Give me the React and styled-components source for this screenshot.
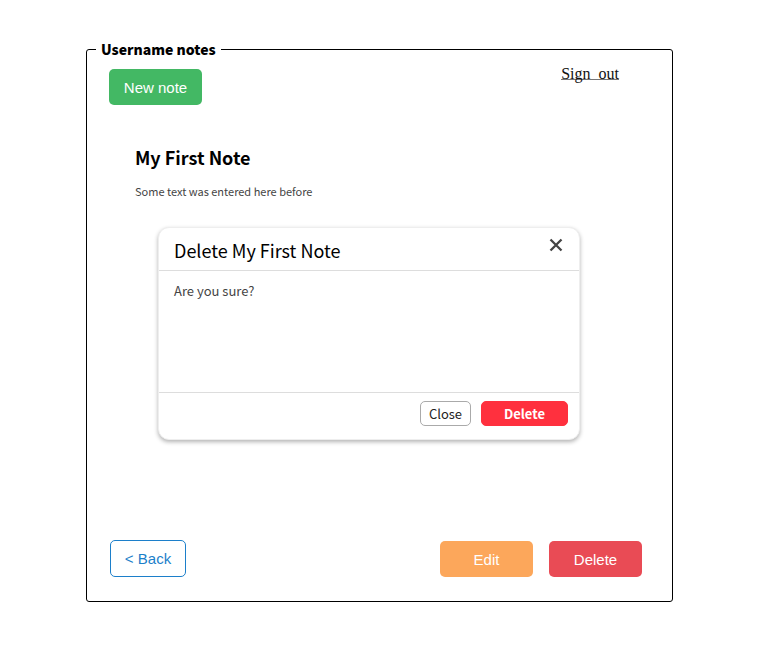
import React from "react";
import styled, { createGlobalStyle } from "styled-components";

const GlobalStyle = createGlobalStyle`
  *, *::before, *::after { box-sizing: border-box; }
  body {
    margin: 0;
    background: #fff;
    color: #000;
    font-family: "Noto Sans CJK JP", "Noto Sans", sans-serif;
  }
`;

const Page = styled.main`
  padding: 39px 96px 46px 86px;
`;

const NotesFrame = styled.fieldset`
  display: flex;
  flex-direction: column;
  min-width: 0;
  margin: 0;
  padding: 9px 30px 24px 22px;
  border: 1px solid #000;
  border-radius: 3px;
`;

const FrameTitle = styled.legend`
  margin-left: -13px;
  padding: 0 5px;
  font-size: 14px;
  line-height: 21px;
  font-weight: 900;
`;

const Toolbar = styled.header`
  display: flex;
  align-items: flex-start;
  justify-content: space-between;
`;

const SignOutLink = styled.a`
  margin-right: 23px;
  border-bottom: 1px solid #777;
  color: #111;
  font-family: "Liberation Serif", serif;
  font-size: 16px;
  line-height: 10px;
  text-decoration: none;
  white-space: pre;
`;

const buttonColors = {
  green: "#43b864",
  orange: "#fca75b",
  red: "#e94b55",
};

const ActionButton = styled.button`
  width: 93px;
  height: 36px;
  padding: 0;
  border: 0;
  border-radius: 5px;
  background: ${({ $color }) => buttonColors[$color]};
  color: #fff;
  font-family: "Liberation Sans", sans-serif;
  font-size: 15px;
  cursor: pointer;
`;

const BackButton = styled(ActionButton)`
  width: 76px;
  height: 37px;
  margin-right: auto;
  border: 1px solid #1c7fca;
  background: #fff;
  color: #1c7fca;
`;

const Note = styled.article`
  margin: 40px 26px 0;
`;

const NoteTitle = styled.h1`
  margin: 0;
  font-size: 18px;
  line-height: 24px;
  font-weight: 700;
`;

const NoteText = styled.p`
  margin: 12px 0 0;
  color: #444;
  font-size: 11px;
  line-height: 20px;
`;

const Dialog = styled.section`
  margin: 26px 62px 0 49px;
  border: 1px solid #eee;
  border-radius: 11px;
  background: #fff;
  box-shadow: 0 2px 4px rgba(0, 0, 0, 0.3);
`;

const DialogHeader = styled.header`
  display: flex;
  align-items: flex-start;
  justify-content: space-between;
  height: 43px;
  padding: 10px 16px 0 15px;
  border-bottom: 1px solid #ddd;
`;

const DialogTitle = styled.h2`
  margin: 0;
  font-size: 18px;
  line-height: 24px;
  font-weight: 400;
`;

const CloseIconButton = styled.button`
  display: flex;
  padding: 0;
  border: 0;
  background: none;
  color: #444;
  cursor: pointer;
`;

const DialogText = styled.p`
  min-height: 121px;
  margin: 0;
  padding: 10px 15px;
  color: #444;
  font-size: 13px;
  line-height: 20px;
`;

const DialogFooter = styled.footer`
  display: flex;
  justify-content: flex-end;
  gap: 10px;
  padding: 8px 11px 13px;
  border-top: 1px solid #ddd;
`;

const DialogButton = styled.button`
  width: ${({ $danger }) => ($danger ? "87px" : "51px")};
  height: 25px;
  padding: 0;
  border: 1px solid ${({ $danger }) => ($danger ? "#ff303e" : "#aaa")};
  border-radius: 5px;
  background: ${({ $danger }) => ($danger ? "#ff303e" : "#fff")};
  color: ${({ $danger }) => ($danger ? "#fff" : "#222")};
  font-family: inherit;
  font-size: 13px;
  line-height: 20px;
  font-weight: ${({ $danger }) => ($danger ? 700 : 400)};
  cursor: pointer;
`;

const Actions = styled.footer`
  display: flex;
  align-items: flex-end;
  gap: 16px;
  margin: 100px 0 0 1px;
`;

export default function App() {
  return (
    <>
      <GlobalStyle />
      <Page>
        <NotesFrame>
          <FrameTitle>Username notes</FrameTitle>
          <Toolbar>
            <ActionButton type="button" $color="green">New note</ActionButton>
            <SignOutLink href="#sign-out">{"Sign  out"}</SignOutLink>
          </Toolbar>
          <Note>
            <NoteTitle>My First Note</NoteTitle>
            <NoteText>Some text was entered here before</NoteText>
          </Note>
          <Dialog role="dialog" aria-labelledby="dialog-title">
            <DialogHeader>
              <DialogTitle id="dialog-title">Delete My First Note</DialogTitle>
              <CloseIconButton type="button" aria-label="Close dialog">
                <svg width="14" height="14" viewBox="0 0 14 14" fill="none" stroke="currentColor" strokeWidth="2.3">
                  <path d="M1.5 1.5 12.5 12.5M12.5 1.5 1.5 12.5" />
                </svg>
              </CloseIconButton>
            </DialogHeader>
            <DialogText>Are you sure?</DialogText>
            <DialogFooter>
              <DialogButton type="button">Close</DialogButton>
              <DialogButton type="button" $danger>Delete</DialogButton>
            </DialogFooter>
          </Dialog>
          <Actions>
            <BackButton type="button">&lt; Back</BackButton>
            <ActionButton type="button" $color="orange">Edit</ActionButton>
            <ActionButton type="button" $color="red">Delete</ActionButton>
          </Actions>
        </NotesFrame>
      </Page>
    </>
  );
}
